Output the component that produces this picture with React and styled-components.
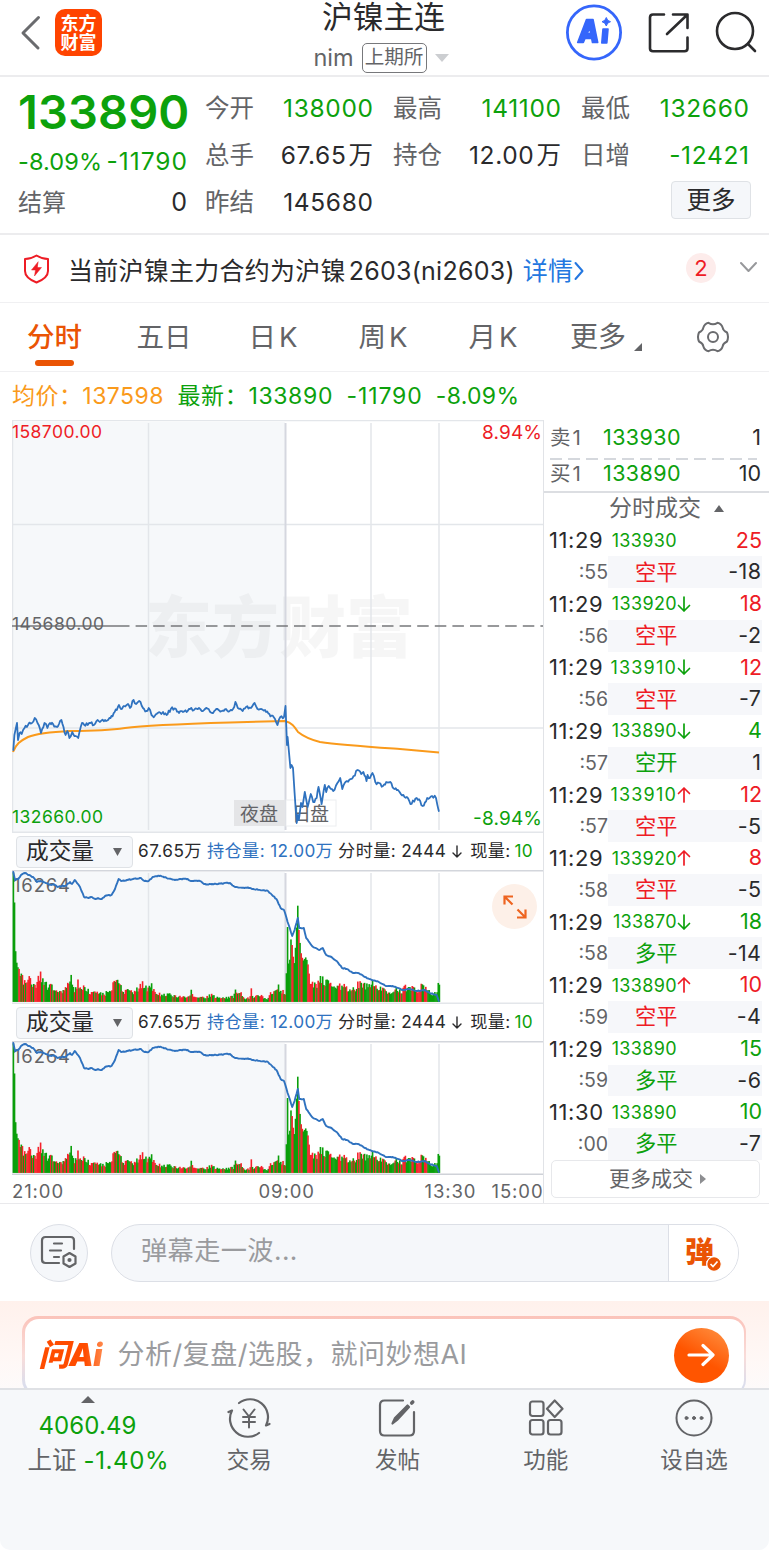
import React from 'react'
import styled, { createGlobalStyle } from 'styled-components'

const RED = '#ee1c25'
const GREEN = '#0ca10c'
const BLUE = '#2f72bf'
const ORANGE = '#ea5404'
const GREY = '#636467'
const DARK = '#2a2a2c'

const GlobalStyle = createGlobalStyle`
  * {
    box-sizing: border-box;
  }
  body {
    margin: 0;
    background: #fff;
    font-family: Inter, 'Noto Sans CJK SC', sans-serif;
    color: ${DARK};
  }
  svg {
    display: block;
    flex: none;
  }
`

const Page = styled.div`
  width: 769px;
  height: 1550px;
  overflow: hidden;
  background: #fff;
  white-space: nowrap;
`

const Text = styled.span`
  font-size: ${({ $size }) => $size || 24}px;
  line-height: 1;
  letter-spacing: ${({ $ls }) => $ls || 0}px;
  margin-right: ${({ $ls }) => -($ls || 0)}px;
  color: ${({ $color }) => $color || 'inherit'};
  font-weight: ${({ $weight }) => $weight || 400};
`

/* header */

const Header = styled.header`
  display: grid;
  grid-template-columns: 200px 1fr 214px;
  height: 77px;
  border-bottom: 2px solid #ececee;
`

const HeaderLeft = styled.div`
  display: flex;
  align-items: flex-start;
  padding: 9px 0 0 20px;
  gap: 14px;
`

const Logo = styled.div`
  display: flex;
  flex-direction: column;
  align-items: center;
  justify-content: center;
  width: 47px;
  height: 47px;
  border-radius: 10px;
  background: #ff4400;
  color: #fff;
  font-size: 18px;
  font-weight: 700;
  line-height: 19px;
`

const HeaderTitle = styled.div`
  display: flex;
  flex-direction: column;
  align-items: center;
  padding-left: 12px;
`

const TitleName = styled.div`
  height: 41px;
  font-size: 30.8px;
  line-height: 34px;
`

const TitleSub = styled.div`
  display: flex;
  align-items: center;
  gap: 8px;
  height: 33px;
  margin-left: -5px;
  color: ${GREY};
`

const Exchange = styled.div`
  width: 65px;
  height: 30px;
  border: 1.5px solid #77787b;
  border-radius: 5px;
  font-size: 19.6px;
  line-height: 27px;
  text-align: center;
`

const HeaderRight = styled.div`
  display: flex;
  align-items: flex-start;
  padding: 4px 0 0 10px;
`

/* quote */

const Quote = styled.section`
  display: flex;
  gap: 18px;
  height: 158px;
  padding: 8px 18px 0 18px;
  border-bottom: 2px solid #ececee;
`

const QuoteMain = styled.div`
  width: 169px;
`

const LastPrice = styled.div`
  height: 51px;
  line-height: 53px;
  font-size: 47px;
  font-weight: 600;
  letter-spacing: 0.1px;
  color: ${GREEN};
`

const Change = styled.div`
  display: flex;
  justify-content: space-between;
  align-items: center;
  height: 43px;
  padding-top: 8px;
`

const QuoteGrid = styled.div`
  display: grid;
  grid-template-columns: repeat(3, 168px);
  grid-auto-rows: 47px;
  column-gap: 20px;
`

const Cell = styled.div`
  display: flex;
  justify-content: space-between;
  align-items: center;
  height: 47px;
`

const Unit = styled.span`
  margin-left: 2px;
`

const MoreButton = styled.div`
  justify-self: end;
  align-self: center;
  width: 80px;
  height: 38px;
  margin: -6px -2px 0 0;
  border: 1.5px solid #dfe2e6;
  border-radius: 4px;
  background: #f5f7fa;
  font-size: 24.5px;
  line-height: 37px;
  text-align: center;
`

/* notice */

const Notice = styled.section`
  display: flex;
  align-items: center;
  height: 68px;
  padding: 0 12px 0 23px;
  border-bottom: 1.5px solid #f0f0f2;
`

const NoticeText = styled.div`
  display: flex;
  flex: 1;
  align-items: center;
  margin: 4px 0 0 18px;
  font-size: 25px;
  line-height: 30px;
  letter-spacing: 0.25px;
`

const NoticeCode = styled.span`
  margin-left: 3px;
`

const NoticeLink = styled.span`
  margin: 0 1px 0 8px;
  color: #2377e0;
`

const Badge = styled.div`
  width: 30px;
  height: 30px;
  margin: -2px 24px 0 0;
  border-radius: 50%;
  background: #fdeceb;
  color: ${RED};
  font-size: 22px;
  line-height: 30px;
  text-align: center;
`

/* tabs */

const Tabs = styled.nav`
  display: grid;
  grid-template-columns: 109px 110px 111px 109px 111px 114px 1fr;
  height: 69px;
  border-bottom: 1.5px solid #f0f0f2;
`

const Tab = styled.div`
  display: flex;
  flex-direction: column;
  align-items: center;
  padding-top: 15px;
  font-size: 27.5px;
  line-height: 38px;
  letter-spacing: ${({ $ls }) => $ls || 0}px;
  color: ${({ $active }) => ($active ? ORANGE : GREY)};
  font-weight: ${({ $active }) => ($active ? 500 : 400)};
  &::after {
    content: '';
    width: 39px;
    height: 6px;
    margin-top: 4px;
    border-radius: 3px;
    background: ${({ $active }) => ($active ? ORANGE : 'transparent')};
  }
`

const MoreTab = styled.div`
  display: flex;
  gap: 8px;
  height: 53px;
  padding: 15px 0 0 20px;
  font-size: 28px;
  line-height: 38px;
  color: ${GREY};
  & > svg {
    margin-top: 25px;
  }
`

const TabSettings = styled.div`
  display: flex;
  justify-content: center;
  padding: 18px 8px 0 0;
`

const Legend = styled.div`
  display: flex;
  align-items: center;
  height: 48px;
  padding-left: 12px;
  gap: 14px;
`

/* chart + trades */

const Body = styled.section`
  display: grid;
  grid-template-columns: 544px 225px;
  height: 784px;
  border-bottom: 1.5px solid #e9e9ec;
`

const Charts = styled.div`
  padding-left: 12px;
  border-right: 1.5px solid #e1e3e7;
`

const PanelBar = styled.div`
  display: flex;
  align-items: center;
  height: 37px;
  padding-left: 4px;
`

const Picker = styled.div`
  display: flex;
  align-items: center;
  justify-content: space-between;
  width: 117px;
  height: 32px;
  margin-right: 5px;
  padding: 0 10px 0 9px;
  border: 1.5px solid #dfe2e6;
  border-radius: 4px;
  background: #f5f7fa;
  font-size: 22.7px;
  line-height: 1;
`

const PanelStat = styled.span`
  margin: -2px 0 0 ${({ $gap }) => $gap || 0}px;
  font-size: 17.2px;
  line-height: 20px;
  letter-spacing: ${({ $ls }) => $ls || 0.35}px;
  color: ${({ $color }) => $color || DARK};
`

const Volume = styled.div`
  position: relative;
  height: 134px;
`

const Expand = styled.div`
  position: absolute;
  right: 6px;
  top: 14px;
  display: flex;
  align-items: center;
  justify-content: center;
  width: 45px;
  height: 45px;
  border-radius: 50%;
  background: #fdf0e8;
`

const TimeAxis = styled.div`
  display: grid;
  grid-template-columns: 246.5px 166px 54px 65px;
  align-items: center;
  height: 28px;
  padding-top: 3px;
  font-size: 18.5px;
  letter-spacing: 0.9px;
  color: ${GREY};
  & > span:last-child {
    text-align: right;
  }
`

const Trades = styled.div`
  display: flex;
  flex-direction: column;
`

const BookRow = styled.div`
  display: grid;
  grid-template-columns: 53px 80px 1fr;
  align-items: center;
  height: ${({ $h }) => $h}px;
  padding: 0 8px 2px 6px;
  color: ${({ $color }) => $color || DARK};
  & > span:last-child {
    justify-self: end;
  }
`

const BookDivider = styled.div`
  height: 1.5px;
  margin: 0 12px 0 6px;
  background: repeating-linear-gradient(90deg, #d5d8dd 0 12px, transparent 12px 18px);
`

const TradesTitle = styled.div`
  display: flex;
  align-items: center;
  justify-content: center;
  gap: 13px;
  height: 34px;
  padding-left: 20px;
  border-top: 2px solid #dcdee2;
  font-size: 23px;
  line-height: 1;
  color: ${GREY};
`

const TradeLine = styled.div`
  display: grid;
  grid-template-columns: 64px 69px 1fr;
  align-items: center;
  height: 31.77px;
  padding-right: 7px;
`

const TradeTime = styled.span`
  justify-self: ${({ $sub }) => ($sub ? 'end' : 'start')};
  padding-left: 5px;
  font-size: ${({ $sub }) => ($sub ? 19.5 : 22)}px;
  letter-spacing: ${({ $sub }) => ($sub ? 0 : 0.6)}px;
  color: ${({ $sub }) => ($sub ? GREY : DARK)};
`

const TradePrice = styled.span`
  justify-self: end;
  font-size: 18px;
  letter-spacing: ${({ $loose }) => ($loose ? 1.2 : 0.35)}px;
  color: ${GREEN};
`

const TradeEnd = styled.div`
  display: flex;
  align-items: center;
  justify-content: space-between;
  flex: 1;
  min-width: 0;
`

const TradeKind = styled.div`
  grid-column: 2 / 4;
  display: flex;
  align-items: center;
  justify-content: space-between;
  height: 31.77px;
  padding: 0 1px 0 27px;
  background: #f6f7fa;
`

const MoreTrades = styled.div`
  display: flex;
  align-items: center;
  justify-content: center;
  gap: 7px;
  width: 209px;
  height: 38px;
  margin-left: 7px;
  padding: 0 0 0 4px;
  border: 1.5px solid #e7e8eb;
  border-radius: 5px;
  font-size: 21px;
  line-height: 1;
  color: ${GREY};
`

/* comment bar */

const CommentBar = styled.section`
  display: flex;
  align-items: center;
  gap: 23px;
  height: 97px;
  padding: 0 0 0 30px;
`

const RoundButton = styled.div`
  display: flex;
  align-items: center;
  justify-content: center;
  width: 58px;
  height: 58px;
  border: 1.5px solid #dcdfe6;
  border-radius: 50%;
  background: #f5f7fa;
`

const CommentInput = styled.div`
  display: flex;
  width: 628px;
  height: 58px;
  border: 1.5px solid #dcdfe6;
  border-radius: 30px;
  background: #f5f7fa;
  overflow: hidden;
`

const Placeholder = styled.div`
  flex: 1;
  padding-left: 29px;
  font-size: 26.2px;
  letter-spacing: 0.4px;
  line-height: 52px;
  color: #9a9b9e;
`

const Barrage = styled.div`
  position: relative;
  width: 70px;
  border-left: 1.5px solid #dcdfe6;
  background: #fff;
  padding-left: 16px;
  font-size: 29px;
  font-weight: 900;
  line-height: 55px;
  color: ${ORANGE};
`

const BarrageCheck = styled.svg`
  position: absolute;
  left: 37px;
  top: 31px;
`

/* ai bar */

const AiBar = styled.section`
  height: 87px;
  padding: 15px 23px 0 22px;
  background: linear-gradient(#fff1ec, #fff8f6 70%, #fdfafa);
  overflow: hidden;
`

const AiBorder = styled.div`
  height: 80px;
  padding: 2.5px;
  border-radius: 16px;
  background: linear-gradient(#fbc3ba, #f9dcd9 50%, #dcdeec 85%);
`

const AiBox = styled.div`
  display: flex;
  align-items: center;
  height: 75px;
  padding: 0 15px 2px 14px;
  border-radius: 14px;
  background: #fff;
`

const AiLogo = styled.span`
  display: flex;
  align-items: center;
  width: 66px;
  font-size: 31px;
  line-height: 38px;
  font-weight: 900;
  letter-spacing: -0.5px;
  font-style: italic;
  background: linear-gradient(90deg, #ff4c00 70%, #ff9055);
  background-clip: text;
  color: transparent;
`

const AiHint = styled.span`
  flex: 1;
  margin-left: 13px;
  font-size: 27px;
  line-height: 34px;
  letter-spacing: 0.5px;
  color: #9a9b9e;
`

const Go = styled.div`
  display: flex;
  align-items: center;
  justify-content: center;
  width: 55px;
  height: 55px;
  border-radius: 50%;
  background: linear-gradient(210deg, #ff9445, #ff5500 55%);
`

/* bottom nav */

const BottomNav = styled.nav`
  display: grid;
  grid-template-columns: 175px repeat(4, 148.3px);
  height: 162px;
  border-top: 2px solid #dfe1e5;
  border-radius: 0 0 10px 10px;
  background: #f6f8fa;
  color: ${GREY};
`

const NavIndex = styled.div`
  display: flex;
  flex-direction: column;
  align-items: center;
  padding: 6px 0 0 0;
  & > svg {
    margin-bottom: 5px;
  }
`

const IndexRow = styled.div`
  display: flex;
  align-items: center;
  gap: 7px;
  height: 35px;
  padding-left: ${({ $shift }) => $shift || 0}px;
`

const NavItem = styled.div`
  display: flex;
  flex-direction: column;
  align-items: center;
  gap: 5px;
  padding-top: 8px;
  font-size: 22.5px;
  line-height: 34px;
`

const quotes = [
  ['今开', '138000', GREEN],
  ['最高', '141100', GREEN],
  ['最低', '132660', GREEN],
  ['总手', '67.65', DARK, '万'],
  ['持仓', '12.00', DARK, '万'],
  ['日增', '-12421', GREEN],
  ['昨结', '145680']
]

const trades = [
  ['11:29', '133930', '', '25', RED, ':55', '空平', '-18'],
  ['11:29', '133920', 'down', '18', RED, ':56', '空平', '-2'],
  ['11:29', '133910', 'down', '12', RED, ':56', '空平', '-7'],
  ['11:29', '133890', 'down', '4', GREEN, ':57', '空开', '1'],
  ['11:29', '133910', 'up', '12', RED, ':57', '空平', '-5'],
  ['11:29', '133920', 'up', '8', RED, ':58', '空平', '-5'],
  ['11:29', '133870', 'down', '18', GREEN, ':58', '多平', '-14'],
  ['11:29', '133890', 'up', '10', RED, ':59', '空平', '-4'],
  ['11:29', '133890', '', '15', GREEN, ':59', '多平', '-6'],
  ['11:30', '133890', '', '10', GREEN, ':00', '多平', '-7']
]

const price =
  '13.3,750 14.4,735 17,723 18,740 19.6,733 21.7,734 24.5,728 28,725 32,723 34.7,718 37.5,723 41,733 44.5,723 47.4,728 50,723 53,724 57,727 59,724 61.4,720 63.5,727 65.6,735 67.3,731 69.4,738 72.3,732 75.4,736 78.2,738 82,723 87.7,725 90.5,723 94,725 97.5,720 100,722 105,720 110.5,718 114.7,712 119,705 121,709 124,706 128,704 130,708 133.6,700 136,704 139.2,701 143,708 146.3,711 148.7,708 151.5,715 154.7,716 157.8,713 161.3,714 163,712 166.6,715 170.8,709 176,709 179,713 183,712 186.6,712 190,709 194,710 199,708 201.7,711 205,709 208.7,709 212,713 217.5,709 221.7,711 226,709 229.7,711 233,709 235.4,702 237.8,708 242.7,711 246,707 251,708 254.6,703 257.5,709 265,710 269.4,714 273.6,717 277.5,725 280.3,717 284,717 285.5,706 287,745 287.6,737 290.4,768 291.5,765 293,768 294.6,793 296.7,823 297.8,815 298.8,820 301,803 302.4,807 304.8,792 307.6,807 310.8,794 313.2,802 316.7,798 318.5,787 321.6,804 324.8,785 326.2,792 328.7,786 333.2,791 337.4,783 340.2,778 342.3,789 345.5,782 350.8,779 353.6,776 357.4,770 361.3,774 363.4,772 366.5,781 367.6,775 370,778 372.5,773 375.3,782 383,786 386.2,782 390.4,782 394.6,789 398,790 403.4,795 406.9,797 410.4,804 416.7,798 420.2,801 422.7,806 427.2,798 432,796 436,798 438.8,811'

const average =
  'M13,752C16,744 20,741 28,737C38,733 50,732 70,731C90,731 112,730 125,728C148,725 180,724 230,722.5L285,721C292,723 294,726 298,732C303,736 308,739 320,742C340,745 371,747 400,749L439,752.5'

const interest =
  '13.3,872 15,880 18,879 21,875 25,873 29,875 33,877 37,882 41,881 45.6,883 51,885 55,885 58,887 62,886 65,886 70,882 72,884 74.7,880 80,887 84,897 88.4,898 91,897 95.4,899 98,898 101.7,899 105,896 111.5,895 115,889 118.6,879 121,881 127,880 133,879 141,878 144.5,881 148.7,881 152.6,877 160.6,875.7 166.6,878 175,880 181,879 187.7,879 191,881 200,881 204,884 212,884 218,884 230,883 235,887 249,888 252,889 268,891 272,895 276.4,899 280.6,908 284,910 287.6,922 292.2,936 294.6,930 297.8,918 299.2,928 303.8,928 306.2,938 312,946 319,950 322.7,948 326.2,955 331.5,957 336.7,961 342,968 347,969 353.6,973 358,973 364.8,977 371.8,980 378.8,982 385.8,986 392.8,986 403.4,990 408.6,989 417.4,991 424.4,990 429.7,993 436.7,995 438.8,1001'

// [x, peak height] envelope of the minute volumes
const envelope = [
  [13, 130], [14, 128], [15, 62], [16, 42], [18, 34], [20, 32], [23, 24], [26, 20], [30, 26], [33, 20], [36, 22],
  [39, 30], [42, 29], [43, 24], [47, 18], [50, 21], [55, 14], [62, 13], [66, 22], [69, 17], [71, 28], [74, 14],
  [78, 22], [80, 15], [83, 20], [90, 12], [95, 13], [102, 9], [105, 9], [106, 17], [107, 10], [112, 14], [113, 21],
  [117, 24], [119, 20], [124, 10], [126, 20], [130, 11], [138, 15], [141, 18], [144, 23], [147, 12], [151, 22],
  [154, 15], [158, 9], [165, 8], [170, 13], [172, 8], [180, 6], [189, 6], [191, 13], [194, 6], [205, 5], [212, 9],
  [215, 5], [225, 5], [233, 6], [236, 16], [238, 8], [241, 10], [245, 4], [250, 5], [251, 14], [253, 5], [260, 9],
  [264, 4], [269, 4], [270, 17], [272, 7], [276, 14], [278, 21], [280, 11], [286, 12], [287.4, 78], [288.5, 38],
  [290, 43], [291, 65], [292.5, 53], [294, 35], [296, 62], [297.6, 98], [299, 68], [301, 49], [303, 41], [306, 45],
  [308, 37], [310, 24], [315, 22], [319, 24], [322, 29], [326, 25], [330, 20], [336, 20], [342, 19], [348, 15],
  [354, 15], [359, 23], [363, 18], [368, 19], [373, 21], [379, 14], [383, 18], [388, 9], [392, 12], [395, 18],
  [401, 13], [407, 18], [412, 17], [417, 14], [423, 19], [427, 13], [433, 9], [437, 10], [438.5, 24], [440, 20]
]

const noise = n => {
  const v = Math.sin(n * 127.1 + 11.7) * 43758.5453
  return v - Math.floor(v)
}

// fills the gaps between key points with minute-sized wiggles
const roughen = (points, amount) => {
  const keys = points.split(' ').map(p => p.split(',').map(Number))
  const out = [keys[0]]
  for (let i = 1; i < keys.length; i++) {
    const [x0, y0] = keys[i - 1]
    const [x1, y1] = keys[i]
    const steps = Math.max(1, Math.round((x1 - x0) / 1.2))
    for (let s = 1; s < steps; s++) {
      const t = s / steps
      const wiggle = (noise(i * 31 + s) - 0.5) * 2 * amount
      out.push([x0 + (x1 - x0) * t, y0 + (y1 - y0) * t + wiggle])
    }
    out.push([x1, y1])
  }
  return out.map(([x, y]) => x.toFixed(1) + ',' + y.toFixed(1)).join(' ')
}

const priceLine = roughen(price, 1.7)
const interestLine = roughen(interest, 0.5)

const peakAt = x => {
  for (let i = 1; i < envelope.length; i++) {
    if (x <= envelope[i][0]) {
      const [x0, h0] = envelope[i - 1]
      const [x1, h1] = envelope[i]
      return h0 + ((h1 - h0) * (x - x0)) / (x1 - x0)
    }
  }
  return 20
}

const bars = Array.from({ length: 377 }, (_, i) => {
  const x = 13.3 + i * 1.133
  const jitter = x < 19 || (x > 286 && x < 308) ? 1 : 0.6 + noise(i) * 0.45
  const green = i === 0 || (x > 286 && x < 292) || (x > 294 && x < 298) || x > 436 || noise(i * 3 + 1) > 0.48
  return { x, h: peakAt(x) * jitter, color: green ? '#0a9f0a' : '#f5222a' }
})

const stroke = { fill: 'none', strokeLinecap: 'round', strokeLinejoin: 'round' }

function Caret({ w, h, dir, color = GREY }) {
  const points = {
    up: `0,${h} ${w},${h} ${w / 2},0`,
    down: `0,0 ${w},0 ${w / 2},${h}`,
    right: `0,0 ${w},${h / 2} 0,${h}`,
    corner: `${w},0 ${w},${h} 0,${h}`
  }
  return (
    <svg width={w} height={h}>
      <polygon points={points[dir]} fill={color} />
    </svg>
  )
}

function Arrow({ dir }) {
  return (
    <svg width="14" height="18" viewBox="0 0 14 18" stroke={dir === 'up' ? RED : GREEN} strokeWidth="1.7" {...stroke}>
      <path d={dir === 'up' ? 'M7 16V2M1.5 7.5L7 2L12.5 7.5' : 'M7 2V16M1.5 10.5L7 16L12.5 10.5'} />
    </svg>
  )
}

function AiIcon() {
  return (
    <svg width="58" height="58" viewBox="0 0 58 58">
      <circle cx="29" cy="28.5" r="26.6" fill="#fff" stroke="#3566fb" strokeWidth="2.800" />
      <path
        d="M21.500 15.500H28L32.700 38.500H27.500L26.700 34.500H20L18.300 38.500H12.700ZM22.300 29.500H25.700L24.700 23.500Z"
        fill="#3566fb"
        stroke="#3566fb"
        strokeWidth="1.600"
        strokeLinejoin="round"
      />
      <path d="M38 25H43L41.800 39H36.800Z" fill="#3566fb" stroke="#3566fb" strokeWidth="1.600" strokeLinejoin="round" />
      <path d="M41.300 13.500Q42 17 45.500 17.700Q42 18.500 41.300 22Q40.500 18.500 37 17.700Q40.500 17 41.300 13.500Z" fill="#3566fb" stroke="#3566fb" strokeWidth="1" />
    </svg>
  )
}

function PriceChart() {
  return (
    <svg width="530.5" height="413" viewBox="12 420 530.5 413">
      <rect x="12" y="422" width="273" height="410" fill="#f6f8fa" />
      <text
        x="145"
        y="652"
        fontSize="67"
        fontWeight="900"
        textLength="268"
        fill="#000"
        fillOpacity="0.035"
        fontFamily="Noto Sans CJK SC, sans-serif"
      >
        东方财富
      </text>
      <g stroke="#e3e6ea" strokeWidth="1.5">
        <path d="M12.500 420V832M12 420.500H543M12 832.300H543M12 524.500H543M12 728H543" fill="none" />
        <path d="M148.500 423V830M371 423V830M439 423V830" />
        <path d="M285.500 423V830" stroke="#d5d7df" strokeWidth="2" />
      </g>
      <path d="M12 626H118" stroke="#77787b" strokeWidth="1.500" />
      <path d="M118 626H543" stroke="#77787b" strokeWidth="1.500" strokeDasharray="11.500 6.100" />
      <g fontSize="17.500">
        <text x="12" y="438" fill={RED} textLength="90">158700.00</text>
        <text x="482" y="439" fill={RED} fontSize="19" textLength="60">8.94%</text>
        <text x="12" y="630" fill={GREY} textLength="92">145680.00</text>
        <text x="12" y="822.500" fill={GREEN} textLength="91">132660.00</text>
        <text x="473" y="824.500" fill={GREEN} fontSize="19" textLength="69">-8.94%</text>
      </g>
      <rect x="234" y="800" width="51" height="26" fill="#e4e5e7" />
      <rect x="286" y="800" width="50" height="26" fill="#fff" stroke="#eceef0" />
      <g fontSize="19" fill={GREY}>
        <text x="240" y="821" textLength="38">夜盘</text>
        <text x="292" y="821" textLength="37">日盘</text>
      </g>
      <path d={average} fill="none" stroke="#fa9a1b" strokeWidth="2" />
      <polyline points={priceLine} stroke={BLUE} strokeWidth="1.800" {...stroke} />
    </svg>
  )
}

function VolumeChart({ last }) {
  return (
    <svg width="530.5" height="134" viewBox="12 870 530.5 134">
      <rect x="12" y="872" width="273" height="130" fill="#f6f8fa" />
      <g stroke="#e3e6ea" strokeWidth="1.500">
        <path d="M12.500 870V1002M148.500 873V1002M371 873V1002M439 873V1002" />
        <path d="M285.500 873V1002" stroke="#d5d7df" strokeWidth="2" />
        <path d="M12 870.700H543" stroke="#d3d6dc" />
        <path d="M12 1003.300H543" stroke={last ? '#cfd2d8' : '#e3e6ea'} />
      </g>
      <text x="13" y="891.500" fontSize="18.500" fill={GREY} textLength="57">
        16264
      </text>
      {bars.map(bar => (
        <rect key={bar.x} x={bar.x - 0.7} y={1001.900 - bar.h} width="1.600" height={bar.h} fill={bar.color} />
      ))}
      <polyline points={interestLine} stroke={BLUE} strokeWidth="1.900" {...stroke} />
    </svg>
  )
}

function PanelHeader() {
  return (
    <PanelBar>
      <Picker>
        成交量
        <Caret w={9} h={8} dir="down" />
      </Picker>
      <PanelStat $ls={0.5}>67.65万</PanelStat>
      <PanelStat $gap={5} $color={BLUE}>持仓量: 12.00万</PanelStat>
      <PanelStat $gap={5}>分时量: 2444</PanelStat>
      <svg width="22" height="16" viewBox="0 0 22 16" stroke={DARK} strokeWidth="1.400" {...stroke}>
        <path d="M11 2V13M7 9L11 13L15 9" />
      </svg>
      <PanelStat $gap={2}>现量:</PanelStat>
      <PanelStat $gap={4} $color={GREEN}>10</PanelStat>
    </PanelBar>
  )
}

function Trade({ trade }) {
  const [time, value, dir, count, color, sec, kind, delta] = trade
  return (
    <>
      <TradeLine>
        <TradeTime>{time}</TradeTime>
        <TradePrice $loose={value === '133910'}>{value}</TradePrice>
        <TradeEnd>
          <span>{dir && <Arrow dir={dir} />}</span>
          <Text $size={21.5} $color={color}>{count}</Text>
        </TradeEnd>
      </TradeLine>
      <TradeLine>
        <TradeTime $sub>{sec}</TradeTime>
        <TradeKind>
          <Text $size={21.2} $color={kind === '空平' ? RED : GREEN}>{kind}</Text>
          <Text $size={21.5} $ls={0.4}>{delta}</Text>
        </TradeKind>
      </TradeLine>
    </>
  )
}

function App() {
  return (
    <Page>
      <GlobalStyle />
      <Header>
        <HeaderLeft>
          <svg width="21" height="47" viewBox="0 0 21 47" stroke="#6a6b6e" strokeWidth="3" {...stroke}>
            <path d="M18.500 8.500L3 24L18 39" />
          </svg>
          <Logo>
            <span>东方</span>
            <span>财富</span>
          </Logo>
        </HeaderLeft>
        <HeaderTitle>
          <TitleName>沪镍主连</TitleName>
          <TitleSub>
            <Text $size={23.5}>nim</Text>
            <Exchange>上期所</Exchange>
            <Caret w={14} h={8} dir="down" color="#ccced1" />
          </TitleSub>
        </HeaderTitle>
        <HeaderRight>
          <AiIcon />
          <svg width="70" height="58" viewBox="623 4 70 58" stroke="#2b2b2d" strokeWidth="2.600" {...stroke}>
            <path d="M664 14.500H653Q650 14.500 650 17.500V48.500Q650 51.200 653 51.200H684.500Q687.500 51.200 687.500 48.500V37.500" />
            <path d="M673 14.500H687.500V28M667 34L687 15" />
          </svg>
          <svg width="76" height="58" viewBox="693 4 76 58" stroke="#2b2b2d" strokeWidth="2.600" {...stroke}>
            <circle cx="735" cy="31" r="18" />
            <path d="M748 44L755 51" />
          </svg>
        </HeaderRight>
      </Header>

      <Quote>
        <QuoteMain>
          <LastPrice>133890</LastPrice>
          <Change>
            <Text $size={23.5} $ls={0.1} $color={GREEN}>-8.09%</Text>
            <Text $size={24.5} $ls={1} $color={GREEN}>-11790</Text>
          </Change>
          <Cell>
            <Text $color={GREY}>结算</Text>
            <Text $size={25}>0</Text>
          </Cell>
        </QuoteMain>
        <QuoteGrid>
          {quotes.map(([label, value, color, unit]) => (
            <Cell key={label}>
              <Text $size={24.5} $color={GREY}>{label}</Text>
              <Text $size={24.5} $ls={0.65} $color={color}>
                {value}
                {unit && <Unit>{unit}</Unit>}
              </Text>
            </Cell>
          ))}
          <span />
          <MoreButton>更多</MoreButton>
        </QuoteGrid>
      </Quote>

      <Notice>
        <svg width="27" height="30" viewBox="0 0 27 30" stroke={RED} strokeWidth="2" {...stroke}>
          <path d="M13.500 1.500Q19 5 25 5V17Q25 24 13.500 28.500Q2 24 2 17V5Q8 5 13.500 1.500Z" />
          <path d="M15 8L8.500 16H12.500L11.500 22L18.500 13.500H14.500Z" fill={RED} strokeWidth="0.500" />
        </svg>
        <NoticeText>
          当前沪镍主力合约为沪镍
          <NoticeCode>2603(ni2603)</NoticeCode>
          <NoticeLink>详情</NoticeLink>
          <svg width="10" height="20" viewBox="0 0 10 20" stroke="#2377e0" strokeWidth="2" {...stroke}>
            <path d="M1.500 2L8.500 10L1.500 18" />
          </svg>
        </NoticeText>
        <Badge>2</Badge>
        <svg width="17" height="16" viewBox="0 0 17 16" stroke="#97989b" strokeWidth="2" {...stroke}>
          <path d="M1 2L8.500 10L16 2" />
        </svg>
      </Notice>

      <Tabs>
        <Tab $active>分时</Tab>
        <Tab>五日</Tab>
        <Tab $ls={3}>日K</Tab>
        <Tab $ls={3}>周K</Tab>
        <Tab $ls={3}>月K</Tab>
        <MoreTab>
          更多
          <Caret w={8} h={8} dir="corner" />
        </MoreTab>
        <TabSettings>
          <svg width="32" height="32" viewBox="0 0 32 32" stroke="#6a6b6e" strokeWidth="2" {...stroke}>
            <path d="M11.500 1.800Q16 4.500 20.500 1.800Q24.500 2.500 25.800 7Q26 9.500 30 11.500Q32 16 30 20.500Q26 22.500 25.800 25Q24.500 29.500 20.500 30.200Q16 27.500 11.500 30.200Q7.500 29.500 6.200 25Q6 22.500 2 20.500Q0 16 2 11.500Q6 9.500 6.200 7Q7.500 2.500 11.500 1.800Z" />
            <circle cx="16" cy="16" r="5" />
          </svg>
        </TabSettings>
      </Tabs>

      <Legend>
        <Text $size={23} $ls={0.45} $color="#fa9a1b">均价：137598</Text>
        <Text $size={23} $ls={0.65} $color={GREEN}>最新：133890</Text>
        <Text $size={23} $ls={0.9} $color={GREEN}>-11790</Text>
        <Text $size={23} $ls={0.3} $color={GREEN}>-8.09%</Text>
      </Legend>

      <Body>
        <Charts>
          <PriceChart />
          <PanelHeader />
          <Volume>
            <VolumeChart />
            <Expand>
              <svg width="24" height="24" viewBox="0 0 24 24" stroke="#ee6420" strokeWidth="2.200" fill="none">
                <path d="M1.500 9.500V1.500H10M2 2L9.500 9.500M22.500 14.500V22.500H14M22 22L14.500 14.500" />
              </svg>
            </Expand>
          </Volume>
          <PanelHeader />
          <Volume>
            <VolumeChart last />
          </Volume>
          <TimeAxis>
            <span>21:00</span>
            <span>09:00</span>
            <span>13:30</span>
            <span>15:00</span>
          </TimeAxis>
        </Charts>

        <Trades>
          <BookRow $h={38} $color={GREEN}>
            <Text $size={20.5} $ls={2} $color={GREY}>卖1</Text>
            <Text $size={21.5} $ls={0.4}>133930</Text>
            <Text $size={21.5} $color={DARK}>1</Text>
          </BookRow>
          <BookDivider />
          <BookRow $h={31} $color={GREEN}>
            <Text $size={20.5} $ls={2} $color={GREY}>买1</Text>
            <Text $size={21.5} $ls={0.4}>133890</Text>
            <Text $size={21.5} $color={DARK}>10</Text>
          </BookRow>
          <TradesTitle>
            分时成交
            <Caret w={10} h={7} dir="up" />
          </TradesTitle>
          {trades.map((trade, i) => (
            <Trade key={i} trade={trade} />
          ))}
          <MoreTrades>
            更多成交
            <Caret w={6} h={10} dir="right" color="#8d8e91" />
          </MoreTrades>
        </Trades>
      </Body>

      <CommentBar>
        <RoundButton>
          <svg width="38" height="36" viewBox="0 0 38 36" stroke={GREY} strokeWidth="2.200" {...stroke}>
            <path d="M34 14V5.500Q34 2 30.500 2H5.500Q2 2 2 5.500V24.500Q2 28 5.500 28H19" />
            <path d="M14 8.500H22M10 15.500H21M14 22H19" />
            <path d="M29.500 18L35.500 21.500V28.500L29.500 32L23.500 28.500V21.500Z" />
            <circle cx="29.500" cy="25" r="1" fill={GREY} />
          </svg>
        </RoundButton>
        <CommentInput>
          <Placeholder>弹幕走一波...</Placeholder>
          <Barrage>
            弹
            <BarrageCheck width="16" height="16" viewBox="0 0 16 16">
              <circle cx="8" cy="8" r="7.300" fill={ORANGE} stroke="#fff" strokeWidth="1.200" />
              <path d="M4.500 8L7 10.500L11.500 5.500" stroke="#fff" strokeWidth="1.700" fill="none" />
            </BarrageCheck>
          </Barrage>
        </CommentInput>
      </CommentBar>

      <AiBar>
        <AiBorder>
          <AiBox>
            <AiLogo>问Ai</AiLogo>
            <AiHint>分析/复盘/选股，就问妙想AI</AiHint>
            <Go>
              <svg width="28" height="24" viewBox="0 0 28 24" stroke="#fff" strokeWidth="3.200" {...stroke}>
                <path d="M2 12H25.500M16 2.500L26 12L16 21.500" />
              </svg>
            </Go>
          </AiBox>
        </AiBorder>
      </AiBar>

      <BottomNav>
        <NavIndex>
          <Caret w={14} h={7} dir="up" />
          <IndexRow>
            <Text $size={24} $ls={0.1} $color={GREEN}>4060.49</Text>
          </IndexRow>
          <IndexRow $shift={21}>
            <Text $size={24.5}>上证</Text>
            <Text $size={24} $ls={0.6} $color={GREEN}>-1.40%</Text>
          </IndexRow>
        </NavIndex>
        <NavItem>
          <svg width="44" height="40" viewBox="0 0 44 40" stroke={GREY} strokeWidth="2.200" {...stroke}>
            <path d="M12 5A18 18 0 0 1 39 27.500L42.500 26M32 35A18 18 0 0 1 5 12.500L1.500 14" />
            <path d="M16.500 11.500L22 18.500L27.500 11.500M22 18.500V29.500M16 19H28M16 24H28" strokeWidth="2" />
          </svg>
          交易
        </NavItem>
        <NavItem>
          <svg width="38" height="40" viewBox="0 0 38 40" stroke={GREY} strokeWidth="2.200" {...stroke}>
            <path d="M25 2.500H6.500Q2 2.500 2 7V33Q2 37.500 6.500 37.500H31.500Q36 37.500 36 33V14" />
            <path d="M14.500 25.500L17 20L29.500 7.500L31 9L19 22Z" fill={GREY} />
            <path d="M33.700 5L34.700 4" strokeWidth="3.600" />
          </svg>
          发帖
        </NavItem>
        <NavItem>
          <svg width="36" height="40" viewBox="0 0 36 40" stroke={GREY} strokeWidth="2.200" {...stroke}>
            <rect x="2" y="3.500" width="13.500" height="14.500" rx="2.500" />
            <rect x="2" y="22" width="13.500" height="14.500" rx="2.500" />
            <rect x="20" y="22" width="13.500" height="14.500" rx="2.500" />
            <path d="M26.700 2.500L34.500 10.700L26.700 19L19 10.700Z" />
          </svg>
          功能
        </NavItem>
        <NavItem>
          <svg width="40" height="40" viewBox="0 0 40 40" stroke={GREY} strokeWidth="2" {...stroke}>
            <circle cx="20" cy="20" r="17.500" />
            <g fill={GREY} strokeWidth="1">
              <circle cx="12.500" cy="20" r="1.500" />
              <circle cx="20" cy="20" r="1.500" />
              <circle cx="27.500" cy="20" r="1.500" />
            </g>
          </svg>
          设自选
        </NavItem>
      </BottomNav>
    </Page>
  )
}

export default App
